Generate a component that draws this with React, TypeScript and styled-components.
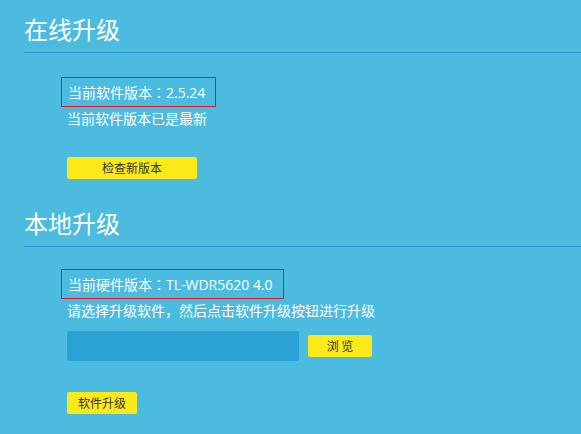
import { createGlobalStyle } from 'styled-components';
import styled from 'styled-components';

const GlobalStyle = createGlobalStyle`
  html, body {
    margin: 0;
    padding: 0;
    background: #4bbbe0;
  }
  body {
    font-family: "Open Sans", "Noto Sans CJK SC", sans-serif;
    color: #ffffff;
  }
`;

const Page = styled.div`
  width: 581px;
  height: 434px;
  padding-left: 24px;
  box-sizing: border-box;
  overflow: hidden;
  background: #4bbbe0;
`;

const Section = styled.section<{ $top: number }>`
  padding-top: ${(p) => p.$top}px;
`;

const Heading = styled.h2`
  margin: 0;
  padding-bottom: 5px;
  font-family: "Noto Sans CJK SC", sans-serif;
  font-size: 24px;
  font-weight: normal;
  line-height: 36px;
  color: #ffffff;
  border-bottom: 1px solid #2b95d8;
`;

const Content = styled.div<{ $top: number }>`
  display: flex;
  flex-direction: column;
  align-items: flex-start;
  padding-top: ${(p) => p.$top}px;
  padding-left: 43px;
`;

const Highlight = styled.div`
  box-sizing: border-box;
  height: 30px;
  margin-left: -6px;
  padding: 0 10px 0 6px;
  border: 1px solid #e8101c;
  font-size: 14px;
  line-height: 28px;
  white-space: nowrap;
`;

/* the full-width colon sits centred in the original font */
const Colon = styled.span`
  font-family: "Noto Sans CJK JP", sans-serif;
`;

const Note = styled.div`
  font-size: 14px;
  line-height: 24px;
  white-space: nowrap;
`;

const Row = styled.div<{ $top: number }>`
  display: flex;
  align-items: center;
  gap: 9px;
  margin-top: ${(p) => p.$top}px;
`;

const FileField = styled.div`
  width: 232px;
  height: 30px;
  border-radius: 3px;
  background: #2ba1d6;
`;

const Button = styled.button<{ $width: number }>`
  width: ${(p) => p.$width}px;
  height: 22px;
  padding: 0;
  border: none;
  border-radius: 2px;
  background: #fce91a;
  color: #333333;
  font-family: "Noto Sans CJK SC", sans-serif;
  font-size: 12px;
  line-height: 22px;
  text-align: center;
  cursor: pointer;
`;

export default function App() {
  return (
    <Page>
      <GlobalStyle />
      <Section $top={11}>
        <Heading>在线升级</Heading>
        <Content $top={24}>
          <Highlight>
            当前软件版本<Colon>：</Colon>2.5.24
          </Highlight>
          <Note>当前软件版本已是最新</Note>
          <Row $top={26}>
            <Button $width={130}>检查新版本</Button>
          </Row>
        </Content>
      </Section>
      <Section $top={26}>
        <Heading>本地升级</Heading>
        <Content $top={22}>
          <Highlight>
            当前硬件版本<Colon>：</Colon>TL-WDR5620 4.0
          </Highlight>
          <Note>请选择升级软件，然后点击软件升级按钮进行升级</Note>
          <Row $top={8}>
            <FileField />
            <Button $width={64}>浏 览</Button>
          </Row>
          <Row $top={31}>
            <Button $width={70}>软件升级</Button>
          </Row>
        </Content>
      </Section>
    </Page>
  );
}
